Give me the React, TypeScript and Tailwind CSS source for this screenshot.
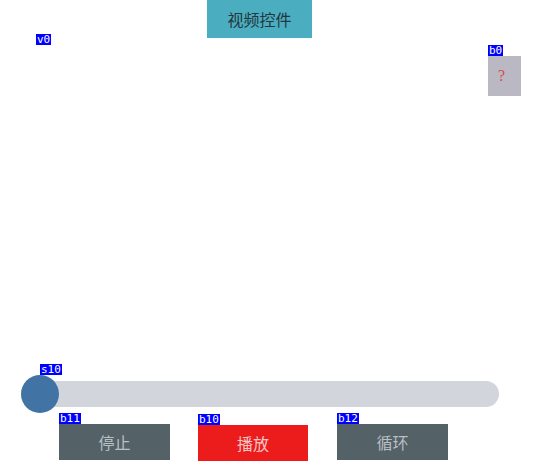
import type { ReactNode } from "react";

// small blue designer tag that sits above a widget
function Tag({ name }: { name: string }) {
  return (
    <span className="absolute left-0 -top-[11px] h-[11px] bg-[#0000ff] px-[1px] text-[11px] leading-[11px] text-white font-['DejaVu_Sans_Mono',monospace]">
      {name}
    </span>
  );
}

function ControlButton({ label, tag, red }: { label: ReactNode; tag: string; red?: boolean }) {
  return (
    <div
      className={`relative flex h-[36px] items-center justify-center text-[16px] ${
        red ? "w-[110px] bg-[#ed1c1c] text-[#f6c6c6]" : "w-[111px] bg-[#546166] text-[#b9bfc3]"
      }`}
    >
      <Tag name={tag} />
      {label}
    </div>
  );
}

export default function App() {
  return (
    <div className="relative flex h-[466px] w-[537px] flex-col overflow-hidden bg-white font-['Noto_Sans_CJK_SC',sans-serif]">
      {/* title */}
      <div className="ml-[207px] flex h-[38px] w-[105px] items-center justify-center bg-[#4aaec0] text-[16px] text-[#24373e]">
        视频控件
      </div>

      {/* video area tag */}
      <div className="relative ml-[36px]">
        <span className="absolute -top-[4px] left-0 h-[11px] bg-[#0000ff] px-[1px] text-[11px] leading-[11px] text-white font-['DejaVu_Sans_Mono',monospace]">
          v0
        </span>
      </div>

      {/* help button */}
      <div className="mt-[18px] flex justify-end pr-[16px]">
        <div className="relative flex h-[40px] w-[33px] items-center justify-center bg-[#b9b8c3] pr-[6px] text-[16px] text-[#e0484a] font-['Liberation_Serif',serif]">
          <Tag name="b0" />?
        </div>
      </div>

      {/* slider */}
      <div className="relative ml-[21px] mt-[279px] flex h-[38px] w-[478px] items-center">
        <span className="absolute left-[19px] -top-[11px] h-[11px] bg-[#0000ff] px-[1px] text-[11px] leading-[11px] text-white font-['DejaVu_Sans_Mono',monospace]">
          s10
        </span>
        <div className="h-[26px] w-full rounded-full bg-[#d2d5dc]" />
        <div className="absolute left-0 top-0 h-[38px] w-[38px] rounded-full bg-[#4174a4]" />
      </div>

      {/* controls */}
      <div className="ml-[59px] mt-[11px] flex items-start">
        <ControlButton label="停止" tag="b11" />
        <div className="ml-[28px] mt-[1px]">
          <ControlButton label="播放" tag="b10" red />
        </div>
        <div className="ml-[29px]">
          <ControlButton label="循环" tag="b12" />
        </div>
      </div>
    </div>
  );
}
